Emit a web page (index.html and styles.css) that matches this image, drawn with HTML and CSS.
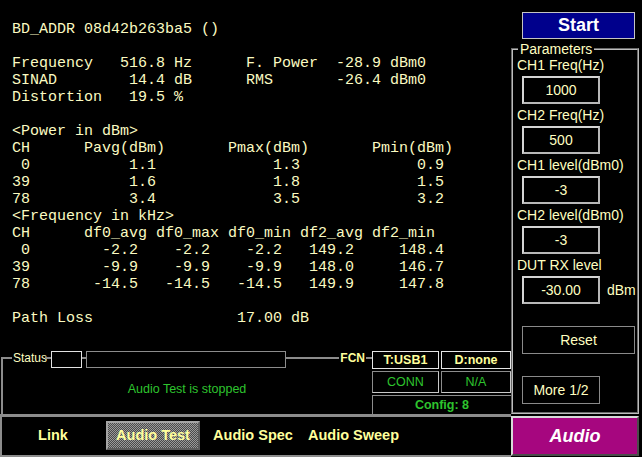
FILE: index.html
```html
<!DOCTYPE html>
<html lang="en">
<head>
<meta charset="utf-8">
<title>Audio Test</title>
<link rel="stylesheet" href="styles.css">
</head>
<body>
<div class="screen">
  <main class="main-col">
<pre class="readout">BD_ADDR 08d42b263ba5 ()

Frequency   516.8 Hz      F. Power  -28.9 dBm0
SINAD        14.4 dB      RMS       -26.4 dBm0
Distortion   19.5 %

&lt;Power in dBm&gt;
CH      Pavg(dBm)       Pmax(dBm)       Pmin(dBm)
 0           1.1             1.3             0.9
39           1.6             1.8             1.5
78           3.4             3.5             3.2
&lt;Frequency in kHz&gt;
CH      df0_avg df0_max df0_min df2_avg df2_min
 0        -2.2    -2.2    -2.2   149.2     148.4
39        -9.9    -9.9    -9.9   148.0     146.7
78       -14.5   -14.5   -14.5   149.9     147.8

Path Loss                17.00 dB</pre>
    <section class="status">
      <div class="status-main">
        <div class="status-head">
          <span class="rule lead"></span>
          <span class="status-label">Status</span>
          <span class="rule r6"></span>
          <span class="led"></span>
          <span class="rule r4"></span>
          <span class="progress"></span>
          <span class="rule grow"></span>
          <span class="fcn">FCN</span>
          <span class="rule r6"></span>
        </div>
        <div class="status-body">Audio Test is stopped</div>
      </div>
      <div class="conn">
        <div class="cell head">T:USB1</div>
        <div class="cell head">D:none</div>
        <div class="cell state">CONN</div>
        <div class="cell state">N/A</div>
        <div class="cell config">Config: 8</div>
      </div>
    </section>
  </main>

  <aside class="side">
    <div class="start">Start</div>
    <fieldset class="params">
      <legend>Parameters</legend>
      <div class="p-label">CH1 Freq(Hz)</div>
      <div class="p-box">1000</div>
      <div class="p-label">CH2 Freq(Hz)</div>
      <div class="p-box">500</div>
      <div class="p-label">CH1 level(dBm0)</div>
      <div class="p-box">-3</div>
      <div class="p-label">CH2 level(dBm0)</div>
      <div class="p-box">-3</div>
      <div class="p-label">DUT RX level</div>
      <div class="p-row">
        <div class="p-box">-30.00</div>
        <span class="unit">dBm</span>
      </div>
      <div class="btn reset">Reset</div>
      <div class="btn more">More 1/2</div>
    </fieldset>
  </aside>

  <nav class="tabs">
    <div class="tab">Link</div>
    <div class="tab active">Audio Test</div>
    <div class="tab">Audio Spec</div>
    <div class="tab">Audio Sweep</div>
  </nav>

  <div class="mode">Audio</div>
</div>
</body>
</html>
```

FILE: styles.css
```css
* { box-sizing: border-box; }

html, body {
  margin: 0;
  padding: 0;
  background: #000;
}

.screen {
  width: 642px;
  height: 457px;
  display: grid;
  grid-template-columns: 511px 131px;
  grid-template-rows: 414px 43px;
  background: #000;
  font-family: "Liberation Sans", Arial, sans-serif;
  color: #ffffc0;
  overflow: hidden;
}

/* ---------- main readout ---------- */
.main-col {
  display: flex;
  flex-direction: column;
  min-height: 0;
}

.readout {
  flex: 1;
  margin: 0;
  padding: 21px 0 0 12px;
  font-family: "Liberation Mono", "Courier New", monospace;
  font-size: 15px;
  line-height: 17px;
  color: #fbfbc2;
  white-space: pre;
}

/* ---------- status frame ---------- */
.status {
  height: 63px;
  display: flex;
}

.status-main {
  width: 372px;
  display: flex;
  flex-direction: column;
}

.status-head {
  height: 18px;
  display: flex;
  align-items: flex-start;
}

.rule {
  height: 2px;
  margin-top: 6px;
  background: #8c8c8c;
  flex: none;
}

.rule.lead {
  width: 11px;
  margin-left: 1px;
  height: 12px;
  background: none;
  border-top: 2px solid #8c8c8c;
  border-left: 2px solid #8c8c8c;
}

.rule.r6 { width: 6px; }
.rule.r4 { width: 4px; }
.rule.grow { flex: 1; }

.status-label {
  font-size: 12px;
  line-height: 14px;
  padding: 0 1px 0 1px;
  width: 33px;
}

.led {
  width: 31px;
  height: 17px;
  border: 1px solid #e2e2e2;
  flex: none;
}

.progress {
  width: 200px;
  height: 17px;
  border: 1px solid #8c8c8c;
  flex: none;
}

.fcn {
  font-size: 12px;
  font-weight: bold;
  line-height: 14px;
  padding: 0 1px;
  color: #ffff9c;
}

.status-body {
  flex: 1;
  margin-left: 1px;
  border-left: 2px solid #8c8c8c;
  padding-top: 13px;
  padding-right: 1px;
  text-align: center;
  font-size: 12.5px;
  line-height: 14px;
  color: #2ec42e;
}

.conn {
  width: 139px;
  display: grid;
  grid-template-columns: 67px 70px;
  grid-template-rows: 18px 22px 19px;
  column-gap: 2px;
  row-gap: 2px;
}

.cell {
  display: flex;
  align-items: center;
  justify-content: center;
  font-size: 12.5px;
}

.cell.head {
  border: 1px solid #e6e6e6;
  font-weight: bold;
  color: #ffff9c;
}

.cell.state {
  border: 1px solid #8c8c8c;
  border-right-color: #c8c8c8;
  border-bottom-color: #c8c8c8;
  color: #2ec42e;
}

.cell.config {
  grid-column: 1 / 3;
  border: 1px solid #8c8c8c;
  border-bottom: none;
  border-right: none;
  font-weight: bold;
  color: #2ec42e;
}

/* ---------- right side panel ---------- */
.side {
  display: flex;
  flex-direction: column;
  padding-top: 12px;
  min-height: 0;
}

.start {
  width: 113px;
  height: 27px;
  margin-left: 11px;
  background: #00008c;
  border: 1px solid #c4c4c4;
  color: #fff;
  font-weight: bold;
  font-size: 18px;
  line-height: 25px;
  text-align: center;
}

.params {
  flex: 1;
  margin: 3px 3px 0 0;
  padding: 0 0 0 4px;
  min-width: 0;
  border: 2px groove #bdbdbd;
}

.params legend {
  font-size: 14px;
  line-height: 14px;
  padding: 0 2px;
  margin-left: 1px;
  color: #ffffc0;
}

.p-label {
  font-size: 14px;
  line-height: 18px;
  height: 18px;
  margin-bottom: 2px;
  white-space: nowrap;
}

.p-box {
  width: 78px;
  height: 28px;
  margin-left: 5px;
  margin-bottom: 2px;
  border: 2px solid #b8b8b8;
  border-top-color: #d4d4d4;
  border-left-color: #d4d4d4;
  font-size: 14px;
  line-height: 24px;
  text-align: center;
}

.p-row {
  display: flex;
  align-items: center;
}

.unit {
  font-size: 14px;
  margin-left: 7px;
  margin-bottom: 2px;
}

.btn {
  height: 28px;
  margin-left: 5px;
  border: 1px solid #8a8a8a;
  font-size: 14px;
  line-height: 26px;
  text-align: center;
}

.btn.reset {
  width: 113px;
  margin-top: 20px;
}

.btn.more {
  width: 78px;
  margin-top: 22px;
}

/* ---------- tabs ---------- */
.tabs {
  display: flex;
  gap: 6px;
  padding: 4px 0 0 4px;
  border-top: 3px solid #8c8c8c;
  border-left: 2px solid #8c8c8c;
  border-bottom: 2px solid #8c8c8c;
}

.tab {
  width: 94px;
  height: 29px;
  border: 2px solid transparent;
  font-size: 14.5px;
  font-weight: bold;
  line-height: 25px;
  text-align: center;
  color: #ffff9c;
  white-space: nowrap;
}

.tab.active {
  border: 2px solid #a4a4a4;
  border-right-color: #5c5c5c;
  border-bottom-color: #5c5c5c;
  background: repeating-conic-gradient(#9a9a9a 0 25%, #4a4a4a 0 50%) 0 0 / 2px 2px;
}

.mode {
  margin: 2px 3px 1px 0;
  background: #a6067f;
  border: 2px solid #d8d8d8;
  border-right-color: #4c4c4c;
  border-bottom-color: #4c4c4c;
  color: #fff;
  font-size: 18px;
  font-weight: bold;
  font-style: italic;
  line-height: 36px;
  text-align: center;
}
```
